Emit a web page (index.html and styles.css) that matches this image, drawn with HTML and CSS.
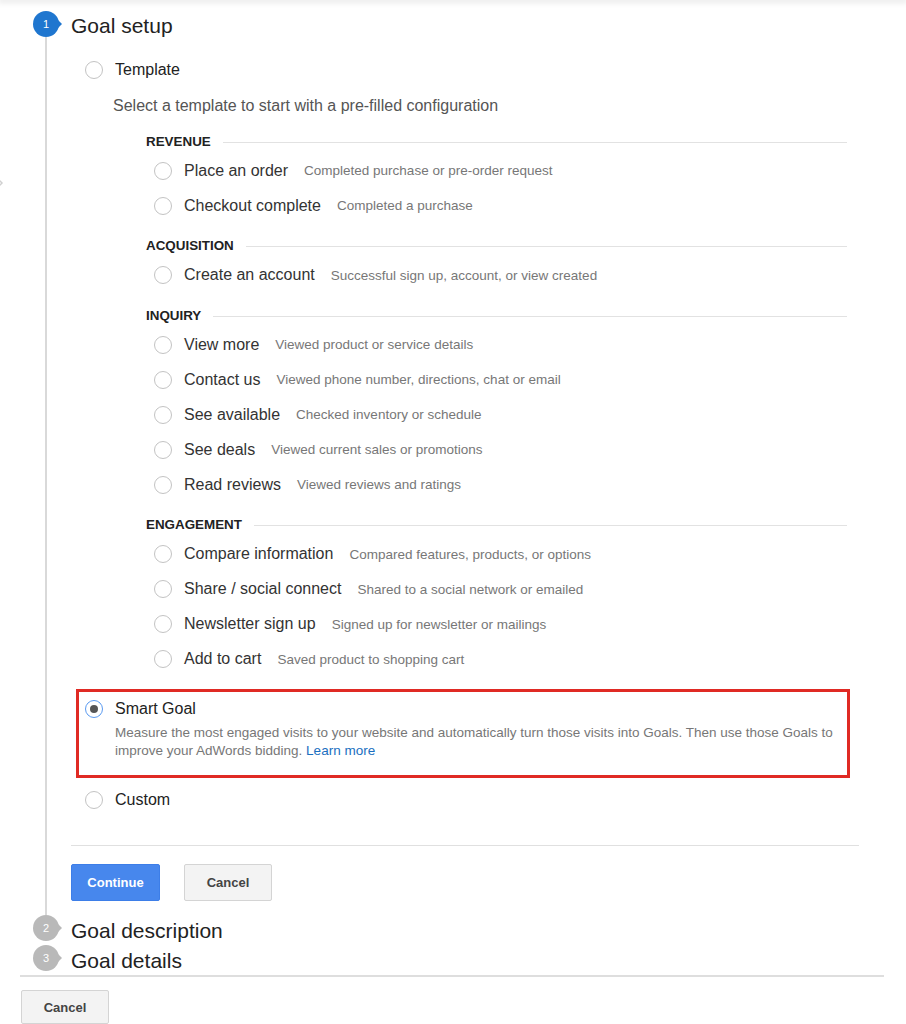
FILE: index.html
```html
<!DOCTYPE html>
<html lang="en">
<head>
<meta charset="utf-8">
<title>Goal setup</title>
<link rel="stylesheet" href="styles.css">
</head>
<body>
<div class="top-shadow"></div>
<svg class="edge-chevron" width="6" height="10" viewBox="0 0 6 10"><path d="M0 1 L4 5 L0 9" fill="none" stroke="#d0d0d0" stroke-width="1.5"/></svg>

<div class="steps">
  <section class="step step-open">
    <div class="rail rail-open">
      <div class="badge badge-active">1</div>
      <div class="rail-line"></div>
    </div>
    <div class="step-main">
      <h2 class="step-title">Goal setup</h2>

      <div class="option option-template">
        <span class="radio"></span>
        <span class="option-label">Template</span>
      </div>
      <p class="hint">Select a template to start with a pre-filled configuration</p>

      <div class="groups">
        <div class="group">
          <div class="group-head"><span class="group-name">REVENUE</span><span class="group-rule"></span></div>
          <div class="item"><span class="radio"></span><span class="item-label">Place an order</span><span class="item-desc">Completed purchase or pre-order request</span></div>
          <div class="item"><span class="radio"></span><span class="item-label">Checkout complete</span><span class="item-desc">Completed a purchase</span></div>
        </div>
        <div class="group">
          <div class="group-head"><span class="group-name">ACQUISITION</span><span class="group-rule"></span></div>
          <div class="item"><span class="radio"></span><span class="item-label">Create an account</span><span class="item-desc">Successful sign up, account, or view created</span></div>
        </div>
        <div class="group">
          <div class="group-head"><span class="group-name">INQUIRY</span><span class="group-rule"></span></div>
          <div class="item"><span class="radio"></span><span class="item-label">View more</span><span class="item-desc">Viewed product or service details</span></div>
          <div class="item"><span class="radio"></span><span class="item-label">Contact us</span><span class="item-desc">Viewed phone number, directions, chat or email</span></div>
          <div class="item"><span class="radio"></span><span class="item-label">See available</span><span class="item-desc">Checked inventory or schedule</span></div>
          <div class="item"><span class="radio"></span><span class="item-label">See deals</span><span class="item-desc">Viewed current sales or promotions</span></div>
          <div class="item"><span class="radio"></span><span class="item-label">Read reviews</span><span class="item-desc">Viewed reviews and ratings</span></div>
        </div>
        <div class="group">
          <div class="group-head"><span class="group-name">ENGAGEMENT</span><span class="group-rule"></span></div>
          <div class="item"><span class="radio"></span><span class="item-label">Compare information</span><span class="item-desc">Compared features, products, or options</span></div>
          <div class="item"><span class="radio"></span><span class="item-label">Share / social connect</span><span class="item-desc">Shared to a social network or emailed</span></div>
          <div class="item"><span class="radio"></span><span class="item-label">Newsletter sign up</span><span class="item-desc">Signed up for newsletter or mailings</span></div>
          <div class="item"><span class="radio"></span><span class="item-label">Add to cart</span><span class="item-desc">Saved product to shopping cart</span></div>
        </div>
      </div>

      <div class="smart-box">
        <div class="option">
          <span class="radio radio-checked"></span>
          <span class="option-label">Smart Goal</span>
        </div>
        <p class="smart-desc">Measure the most engaged visits to your website and automatically turn those visits into Goals. Then use those Goals to improve your AdWords bidding. <a class="link" href="#">Learn more</a></p>
      </div>

      <div class="option option-custom">
        <span class="radio"></span>
        <span class="option-label">Custom</span>
      </div>

      <div class="separator"></div>

      <div class="actions">
        <button class="btn btn-primary">Continue</button>
        <button class="btn">Cancel</button>
      </div>
    </div>
  </section>

  <section class="step">
    <div class="rail"><div class="badge">2</div></div>
    <div class="step-main"><h2 class="step-title step-title-closed">Goal description</h2></div>
  </section>

  <section class="step">
    <div class="rail"><div class="badge">3</div></div>
    <div class="step-main"><h2 class="step-title step-title-closed">Goal details</h2></div>
  </section>
</div>

<div class="footer-rule"></div>
<div class="footer">
  <button class="btn btn-footer">Cancel</button>
</div>
</body>
</html>
```

FILE: styles.css
```css
* { box-sizing: border-box; }

html, body {
  margin: 0;
  padding: 0;
  background: #ffffff;
}

body {
  font-family: "Liberation Sans", Arial, Helvetica, sans-serif;
  color: #222;
  width: 906px;
  height: 1024px;
  overflow: hidden;
  position: relative;
}

.top-shadow {
  height: 0;
  box-shadow: 0 0 6px 2px rgba(0, 0, 0, 0.13);
  position: relative;
  z-index: 2;
}

.edge-chevron {
  position: absolute;
  left: -2px;
  top: 178px;
}

.steps {
  display: flex;
  flex-direction: column;
}

.step {
  display: grid;
  grid-template-columns: 71px 1fr;
  height: 30px;
}

.step-open {
  height: auto;
}

.rail {
  display: flex;
  flex-direction: column;
}

.rail-open {
  padding-top: 11px;
}

.badge {
  width: 26px;
  height: 26px;
  margin-left: 33px;
  border-radius: 50%;
  background: #b9b9b9;
  color: #fff;
  font-size: 11px;
  display: flex;
  align-items: center;
  justify-content: center;
  position: relative;
  flex: none;
}

.badge::after {
  content: "";
  position: absolute;
  right: -3px;
  top: 9px;
  border-left: 4px solid #b9b9b9;
  border-top: 4px solid transparent;
  border-bottom: 4px solid transparent;
}

.badge-active {
  background: #1f76cf;
}

.badge-active::after {
  border-left-color: #1f76cf;
}

.rail-line {
  flex: 1;
  width: 2px;
  margin-left: 45px;
  background: #d9d9d9;
}

.step-main {
  padding-right: 47px;
  display: flex;
  flex-direction: column;
}

.step-open .step-main {
  padding-top: 11px;
  padding-bottom: 14px;
}

.step-title {
  margin: 0;
  padding-top: 2px;
  font-size: 21px;
  line-height: 26px;
  font-weight: normal;
  color: #222;
}

.step-title-closed {
  padding-top: 3px;
}

.option {
  display: flex;
  align-items: center;
  height: 30px;
  gap: 12px;
  padding-left: 14px;
}

.option-template {
  margin-top: 16px;
}

.option-label {
  font-size: 16px;
  color: #222;
}

.radio {
  width: 18px;
  height: 18px;
  border-radius: 50%;
  border: 1.5px solid #c3c3c3;
  background: #fff;
  flex: none;
  display: flex;
  align-items: center;
  justify-content: center;
}

.radio-checked {
  border-color: #5a9af0;
}

.radio-checked::before {
  content: "";
  width: 8px;
  height: 8px;
  border-radius: 50%;
  background: #555;
}

.hint {
  margin: 11px 0 0 42px;
  font-size: 16px;
  line-height: 20px;
  color: #555;
}

.groups {
  margin: 15px 12px 0 75px;
  display: flex;
  flex-direction: column;
  gap: 12.5px;
}

.group-head {
  display: flex;
  align-items: center;
  height: 20px;
  gap: 12px;
  margin-bottom: 2px;
}

.group-name {
  font-size: 13.4px;
  font-weight: bold;
  color: #222;
}

.group-rule {
  flex: 1;
  height: 1px;
  background: #e2e2e2;
  margin-top: 2px;
}

.item {
  display: flex;
  align-items: center;
  height: 35px;
  padding-left: 8px;
}

.item .radio {
  margin-right: 12px;
}

.item-label {
  font-size: 16px;
  color: #333;
  margin-right: 16px;
}

.item-desc {
  font-size: 13.5px;
  color: #777;
}

.smart-box {
  margin: 12.5px 0 0 5px;
  width: 774px;
  border: 3px solid #e02a24;
  padding: 2px 8px 15px 0;
}

.smart-box .option {
  padding-left: 6px;
}

.smart-desc {
  margin: 0 0 0 36px;
  font-size: 13.5px;
  line-height: 18px;
  color: #777;
}

.link {
  color: #1a6fc0;
  text-decoration: none;
}

.option-custom {
  margin-top: 7px;
}

.separator {
  margin-top: 30px;
  height: 1px;
  background: #e0e0e0;
}

.actions {
  display: flex;
  gap: 24px;
  margin-top: 18px;
}

.btn {
  font-family: "Liberation Sans", Arial, Helvetica, sans-serif;
  font-size: 13px;
  font-weight: bold;
  height: 37px;
  width: 88px;
  border-radius: 2px;
  border: 1px solid #d4d4d4;
  background: #f3f3f3;
  color: #444;
  padding: 0;
}

.btn-primary {
  width: 89px;
  background: #4787ed;
  border-color: #3d7ee8;
  color: #fff;
}

.footer-rule {
  margin-left: 20px;
  width: 864px;
  height: 2px;
  background: #dedede;
}

.footer {
  padding: 13px 0 0 21px;
}

.btn-footer {
  height: 34px;
}
```
